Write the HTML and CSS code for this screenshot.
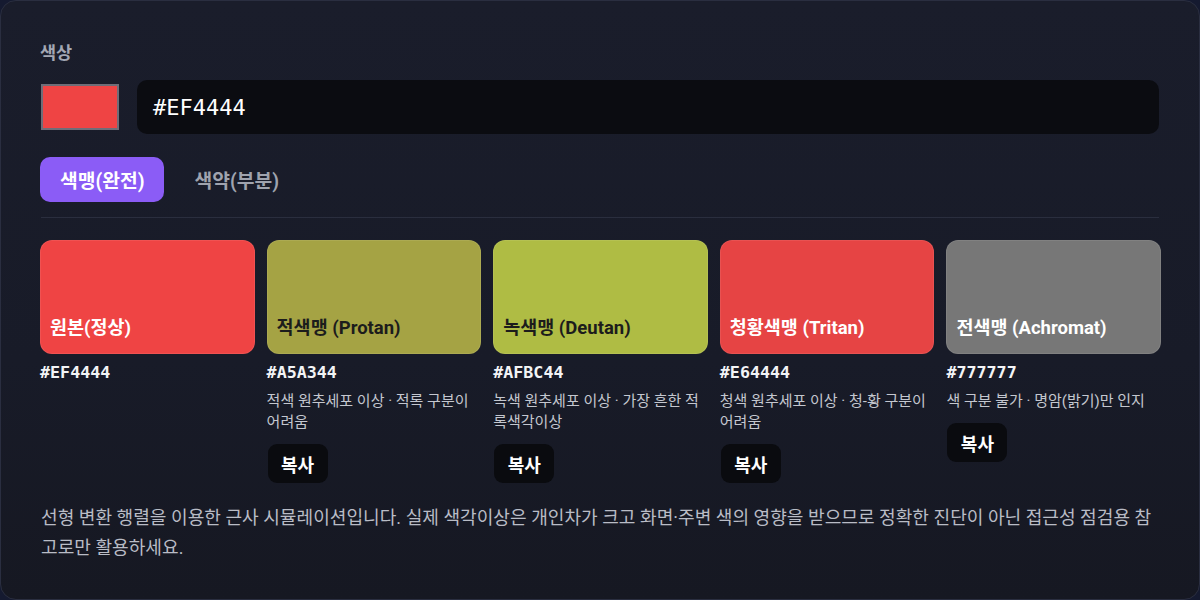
FILE: index.html
```html
<!DOCTYPE html>
<html lang="ko">
<head>
<meta charset="utf-8">
<link rel="stylesheet" href="styles.css">
</head>
<body>
<div class="panel">
  <div class="label">색상</div>
  <div class="input-row">
    <div class="picker"></div>
    <div class="hex-input">#EF4444</div>
  </div>
  <div class="tabs">
    <div class="tab active">색맹(완전)</div>
    <div class="tab">색약(부분)</div>
  </div>
  <div class="divider"></div>
  <div class="grid">
    <div class="item">
      <div class="tile light" style="background:#EF4444">원본(정상)</div>
      <div class="hex">#EF4444</div>
    </div>
    <div class="item">
      <div class="tile dark" style="background:#A5A344">적색맹 (Protan)</div>
      <div class="hex">#A5A344</div>
      <div class="desc">적색 원추세포 이상 · 적록 구분이 어려움</div>
      <div class="copy">복사</div>
    </div>
    <div class="item">
      <div class="tile dark" style="background:#AFBC44">녹색맹 (Deutan)</div>
      <div class="hex">#AFBC44</div>
      <div class="desc">녹색 원추세포 이상 · 가장 흔한 적록색각이상</div>
      <div class="copy">복사</div>
    </div>
    <div class="item">
      <div class="tile light" style="background:#E64444">청황색맹 (Tritan)</div>
      <div class="hex">#E64444</div>
      <div class="desc">청색 원추세포 이상 · 청-황 구분이 어려움</div>
      <div class="copy">복사</div>
    </div>
    <div class="item">
      <div class="tile light" style="background:#777777">전색맹 (Achromat)</div>
      <div class="hex">#777777</div>
      <div class="desc">색 구분 불가 · 명암(밝기)만 인지</div>
      <div class="copy">복사</div>
    </div>
  </div>
  <p class="note">선형 변환 행렬을 이용한 근사 시뮬레이션입니다. 실제 색각이상은 개인차가 크고 화면·주변 색의 영향을 받으므로 정확한 진단이 아닌 접근성 점검용 참고로만 활용하세요.</p>
</div>
</body>
</html>
```
FILE: styles.css
```css
* { box-sizing: border-box; }
html, body { margin: 0; padding: 0; }
body {
  background: #151a30;
  width: 1200px;
  height: 600px;
  overflow: hidden;
  font-family: Roboto, "Noto Sans CJK KR", sans-serif;
  color: #e5e7eb;
}
.panel {
  width: 1200px;
  height: 600px;
  border: 1px solid #2a2e40;
  border-radius: 16px;
  background: linear-gradient(180deg, #1a1d2b 0%, #181b28 60%, #161822 100%);
  padding: 40px 39px 0 38px;
}
.label {
  font-size: 17.5px;
  line-height: 24px;
  font-weight: 700;
  color: #a3a7b3;
  margin-left: 1px;
  margin-bottom: 15px;
}
.input-row {
  display: flex;
  align-items: center;
  gap: 18px;
}
.picker {
  width: 78px;
  height: 46px;
  margin-left: 2px;
  background: #ef4444;
  border: 2px solid #6f6d78;
}
.hex-input {
  flex: 1;
  height: 54px;
  background: #0b0c11;
  border-radius: 10px;
  padding-left: 16px;
  display: flex;
  align-items: center;
  font-family: "DejaVu Sans Mono", monospace;
  font-size: 22px;
  color: #ffffff;
  margin-right: 1px;
}
.tabs {
  display: flex;
  gap: 8px;
  margin-top: 23px;
}
.tab {
  height: 45px;
  padding: 0 22px;
  border-radius: 10px;
  display: flex;
  align-items: center;
  font-size: 19.3px;
  font-weight: 700;
  color: #9fa3ae;
}
.tab.active {
  background: #8b5cf6;
  color: #ffffff;
  padding: 0 20px;
  margin-left: 1px;
}
.divider {
  height: 1px;
  background: #2a2e3e;
  margin-top: 15px;
  margin-left: 2px;
  margin-right: 1px;
}
.grid {
  display: grid;
  grid-template-columns: repeat(5, 1fr);
  gap: 12px;
  margin-top: 22px;
  margin-left: 1px;
  margin-right: -1px;
}
.tile {
  height: 114px;
  border-radius: 12px;
  border: 1px solid rgba(255,255,255,0.08);
  display: flex;
  align-items: flex-end;
  padding: 0 9px 14px;
  font-size: 18.5px;
  font-weight: 700;
}
.tile.light { color: #ffffff; }
.tile.dark { color: #1c1c1c; }
.hex {
  font-family: "DejaVu Sans Mono", monospace;
  font-size: 16.7px;
  font-weight: 700;
  color: #f3f4f6;
  line-height: 20px;
  margin-top: 8px;
  margin-left: 0;
}
.desc {
  font-size: 15px;
  line-height: 21px;
  color: #c4c7cf;
  margin-top: 9px;
  margin-left: 0;
  word-break: break-all;
}
.copy {
  display: inline-flex;
  align-items: center;
  justify-content: center;
  width: 60px;
  height: 39px;
  margin-top: 11px;
  margin-left: 1px;
  background: #0a0b0f;
  border-radius: 9px;
  font-size: 18px;
  font-weight: 700;
  color: #ffffff;
}
.note {
  margin: 20px 0 0 2px;
  font-size: 18.1px;
  line-height: 30px;
  color: #b9bcc6;
  word-break: break-all;
}
```
